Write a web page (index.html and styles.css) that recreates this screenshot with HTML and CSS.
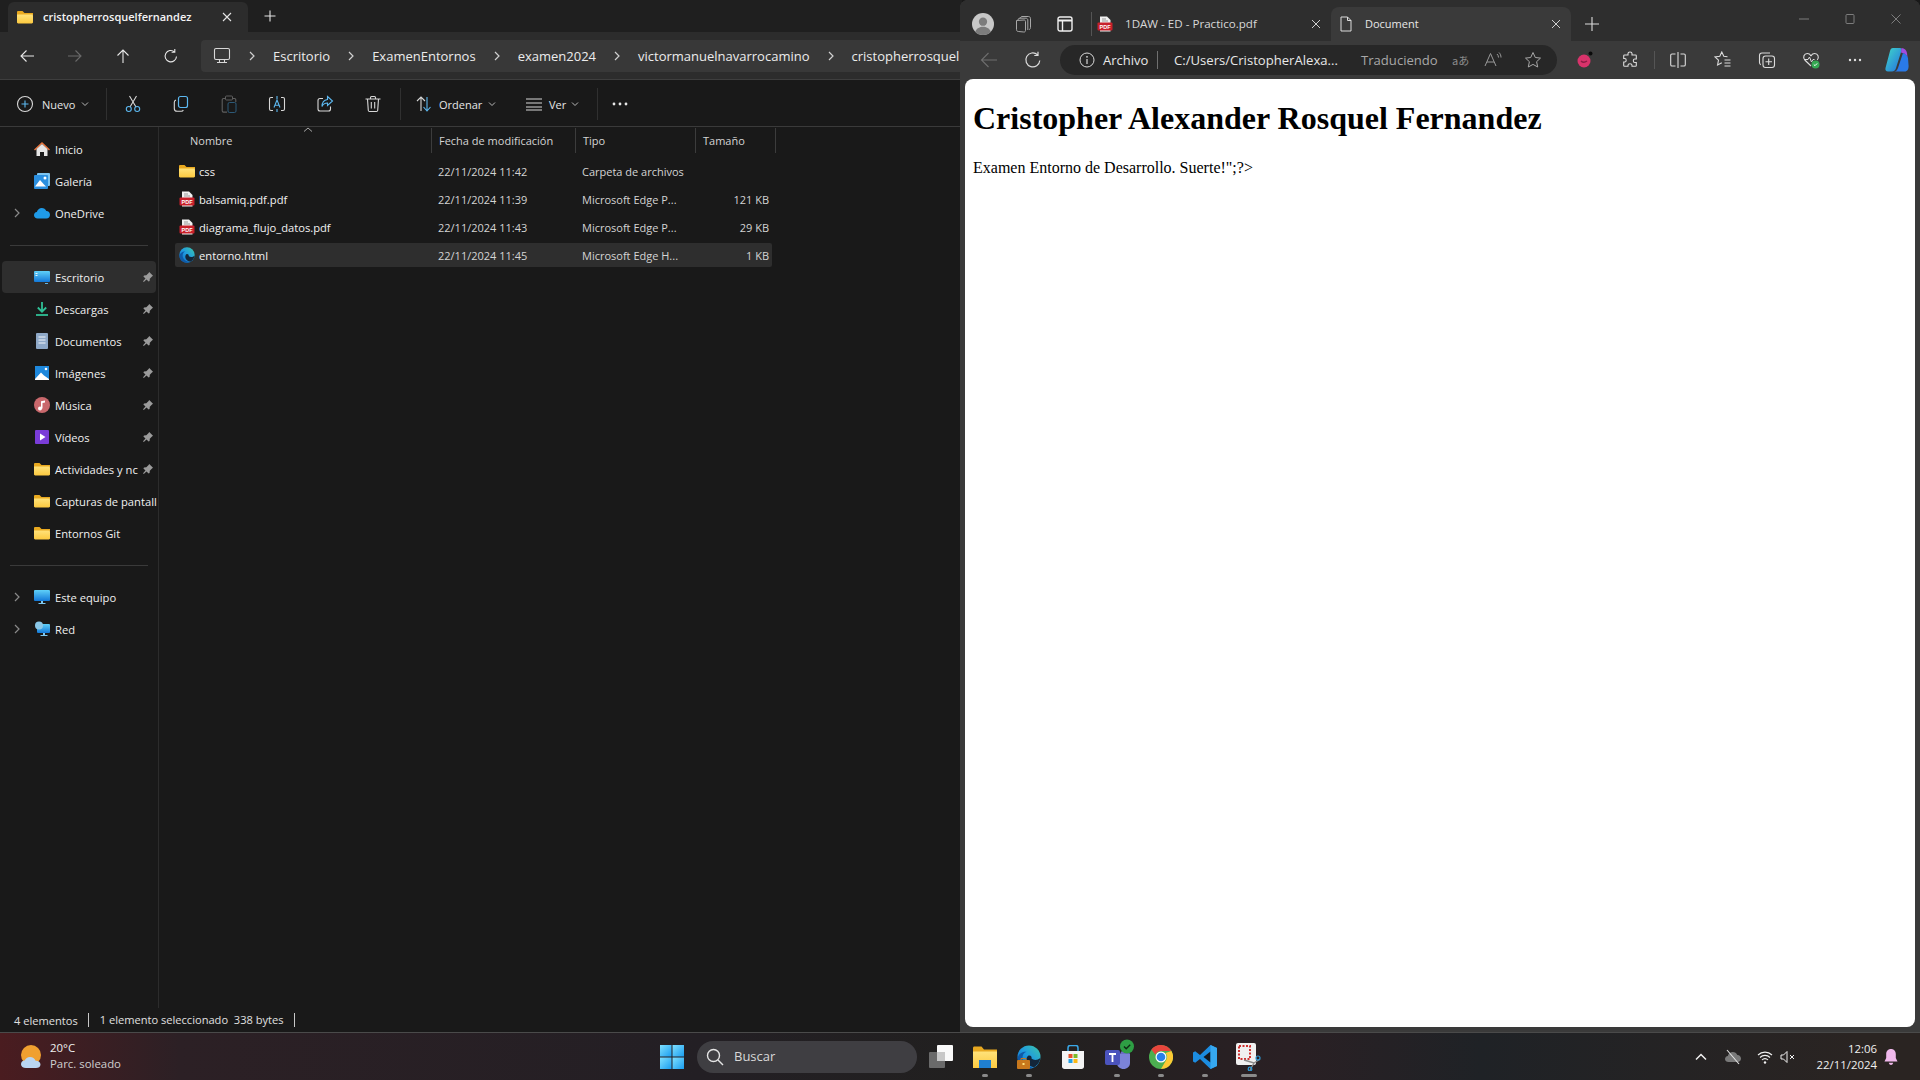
FILE: index.html
```html
<!DOCTYPE html>
<html lang="es">
<head>
<meta charset="UTF-8">
<title>Explorador y Edge</title>
<link rel="stylesheet" href="styles.css">
</head>
<body>

<svg class="defs" width="0" height="0">
	<defs>
		<linearGradient id="fold" x1="0" y1="0" x2="0" y2="1"><stop offset="0" stop-color="#ffe27a"/><stop offset="1" stop-color="#fcc93f"/></linearGradient>
		<linearGradient id="edgeA" x1="1" y1="0" x2="0" y2="1"><stop offset="0" stop-color="#3cc8a8"/><stop offset=".5" stop-color="#1f9ae0"/><stop offset="1" stop-color="#1068c0"/></linearGradient>
		<linearGradient id="blue" x1="0" y1="0" x2="0" y2="1"><stop offset="0" stop-color="#5fd0f8"/><stop offset="1" stop-color="#1378d8"/></linearGradient>
		<linearGradient id="win" x1="0" y1="0" x2="1" y2="1"><stop offset="0" stop-color="#7fe0ff"/><stop offset="1" stop-color="#1a9df0"/></linearGradient>
		<linearGradient id="cop" x1="0" y1="0" x2="1" y2="1"><stop offset="0" stop-color="#3fd8c8"/><stop offset="1" stop-color="#2470e0"/></linearGradient>
		<symbol id="folder" viewBox="0 0 16 16"><path d="M0 3.200C0 2.500.5 2 1.200 2h4.300l2 2H16v2H0z" fill="#e9a91f"/><path d="M0 5.500h14.800c.7 0 1.200.5 1.200 1.200v6.600c0 .7-.5 1.200-1.200 1.200H1.200C.5 14.500 0 14 0 13.300z" fill="url(#fold)"/></symbol>
		<symbol id="pdf" viewBox="0 0 16 16"><path d="M3 .5h7l3.500 3.500V15.500H3z" fill="#f1f1f1"/><path d="M5 3h4M5 5h6" stroke="#999" stroke-width="1"/><rect x="0.500" y="6.500" width="15" height="8" rx="1" fill="#c8202a"/><text x="8" y="12.500" class="pdf-label" text-anchor="middle">PDF</text></symbol>
		<symbol id="pin" viewBox="0 0 12 12"><path d="M7.200 1 11 4.800l-1 .6-2.200 2.300-.2 2.300-1 .6L4.500 8.500 1.800 11 1 10.200l2.500-2.700L1.400 5.400l.6-1 2.300-.2L6.600 2z" fill="#9b9b9b"/></symbol>
		<symbol id="chev" viewBox="0 0 8 12"><path d="M2 2l4 4-4 4" fill="none" stroke="currentColor" stroke-width="1.200"/></symbol>
		<symbol id="down" viewBox="0 0 8 8"><path d="M1 2.500l3 3 3-3" fill="none" stroke="#b8b8b8" stroke-width="1"/></symbol>
		<symbol id="edge" viewBox="0 0 24 24"><circle cx="12" cy="12" r="11.500" fill="url(#edgeA)"/><path d="M.6 13C1.500 8.500 6 6 9.500 6.800c-3 1-4.300 3.500-4 7 .4 4.500 5 8 10 8.700-1.200.6-2.300 1-3.500 1C5 23.500.3 18.500.6 13z" fill="#0f5aa8"/><path d="M11.500 10.500c2.500-.5 3.500 1.500 3 3 2 2 6 2 8.800-.5-.4 4-3 7.500-6.300 9.200-3-.2-7-3-7.500-6.700-.2-2 .3-4 2-5z" fill="#13263a"/></symbol>
	</defs>
</svg>

<div class="desktop">

	<!-- explorador -->
	<div class="explorer">
		<div class="ex-tabs">
			<div class="ex-tab">
				<svg class="i16"><use href="#folder"/></svg>
				<span class="ex-tab-name">cristopherrosquelfernandez</span>
				<svg class="i12 ex-tab-x" viewBox="0 0 12 12"><path d="M2 2l8 8M10 2l-8 8" stroke="#e4e4e4" stroke-width="1.100"/></svg>
			</div>
			<svg class="i12 ex-tab-plus" viewBox="0 0 12 12"><path d="M6 .5v11M.5 6h11" stroke="#e4e4e4" stroke-width="1.100"/></svg>
		</div>

		<div class="ex-nav">
			<div class="nav-btn"><svg class="i16" viewBox="0 0 16 16"><path d="M15 8H2M7.500 2.500 2 8l5.500 5.500" fill="none" stroke="#e8e8e8" stroke-width="1.100"/></svg></div>
			<div class="nav-btn"><svg class="i16" viewBox="0 0 16 16"><path d="M1 8h13M8.500 2.500 14 8l-5.500 5.500" fill="none" stroke="#6a6a6a" stroke-width="1.100"/></svg></div>
			<div class="nav-btn"><svg class="i16" viewBox="0 0 16 16"><path d="M8 15V2M2.500 7.500 8 2l5.500 5.500" fill="none" stroke="#e8e8e8" stroke-width="1.100"/></svg></div>
			<div class="nav-btn"><svg class="i16" viewBox="0 0 16 16"><path d="M13.500 8.500A5.700 5.700 0 1 1 11.500 3.800M11.800 1v3.200H8.600" fill="none" stroke="#e8e8e8" stroke-width="1.100"/></svg></div>
			<div class="crumbs">
				<svg class="crumb-pc" viewBox="0 0 18 18"><rect x="1.500" y="1.500" width="15" height="11" rx="1.500" fill="none" stroke="#d8d8d8" stroke-width="1.100"/><path d="M6.500 12.500v3M11.500 12.500v3M4 15.500h10" stroke="#d8d8d8" stroke-width="1.100"/></svg>
				<svg class="crumb-sep"><use href="#chev"/></svg><span class="crumb">Escritorio</span>
				<svg class="crumb-sep"><use href="#chev"/></svg><span class="crumb">ExamenEntornos</span>
				<svg class="crumb-sep"><use href="#chev"/></svg><span class="crumb">examen2024</span>
				<svg class="crumb-sep"><use href="#chev"/></svg><span class="crumb">victormanuelnavarrocamino</span>
				<svg class="crumb-sep"><use href="#chev"/></svg><span class="crumb">cristopherrosquel</span>
			</div>
		</div>

		<div class="ex-tools">
			<svg class="i18" viewBox="0 0 18 18"><circle cx="9" cy="9" r="7.500" fill="none" stroke="#d8d8d8" stroke-width="1.100"/><path d="M9 5.500v7M5.500 9h7" stroke="#5cb8f0" stroke-width="1.100"/></svg>
			<span class="tool-label tool-new">Nuevo</span>
			<svg class="i8 tool-down"><use href="#down"/></svg>
			<div class="tool-sep sep-a"></div>
			<div class="tool-btn"><svg class="i18" viewBox="0 0 18 18"><path d="M5.500 1l6.500 11M12.500 1 6 12" stroke="#d8d8d8" stroke-width="1.100"/><circle cx="4.800" cy="14" r="2.500" fill="none" stroke="#5cb8f0" stroke-width="1.100"/><circle cx="13.200" cy="14" r="2.500" fill="none" stroke="#5cb8f0" stroke-width="1.100"/></svg></div>
			<div class="tool-btn"><svg class="i18" viewBox="0 0 18 18"><rect x="6.500" y="1.500" width="9" height="11" rx="2" fill="none" stroke="#5cb8f0" stroke-width="1.200"/><path d="M4 5C2.800 5.400 2.300 6 2.300 7.200v6.300c0 1.800 1 2.800 2.800 2.800h4.200c1 0 1.700-.5 2-1.300" fill="none" stroke="#d8d8d8" stroke-width="1.100"/></svg></div>
			<div class="tool-btn"><svg class="i18" viewBox="0 0 18 18"><path d="M5 3.500H3.500c-.8 0-1.300.5-1.300 1.300v11c0 .8.500 1.300 1.300 1.300H7M13 3.500h1.500c.8 0 1.300.5 1.300 1.300V7" fill="none" stroke="#5f5f5f" stroke-width="1.100"/><rect x="5.500" y="1" width="7" height="4" rx="1" fill="none" stroke="#5f5f5f"/><rect x="8" y="7.500" width="8" height="10" rx="1.500" fill="none" stroke="#2d5a78"/></svg></div>
			<div class="tool-btn"><svg class="i18" viewBox="0 0 18 18"><path d="M5 2.500H3c-1 0-1.500.5-1.500 1.500v10c0 1 .5 1.500 1.500 1.500h2M13 2.500h2c1 0 1.500.5 1.500 1.500v10c0 1-.5 1.500-1.500 1.500h-2" fill="none" stroke="#d8d8d8" stroke-width="1.100"/><path d="M6 12.500 9 5l3 7.500M7 10.200h4M9 1v3M9 14v3" fill="none" stroke="#5cb8f0" stroke-width="1.100"/></svg></div>
			<div class="tool-btn"><svg class="i18" viewBox="0 0 18 18"><path d="M7 3.500H4c-1.200 0-2 .8-2 2V14c0 1.200.8 2 2 2h8.500c1.200 0 2-.8 2-2v-2.500" fill="none" stroke="#d8d8d8" stroke-width="1.100"/><path d="M11.500 1.500 16.500 6l-5 4.500V8c-3 0-4.500 1.200-5.500 3.500 0-4 2-6.500 5.500-7z" fill="none" stroke="#5cb8f0" stroke-width="1.100"/></svg></div>
			<div class="tool-btn"><svg class="i18" viewBox="0 0 18 18"><path d="M1.500 4h15M6.500 4V2.500c0-.7.4-1 1-1h3c.6 0 1 .3 1 1V4M3.500 4l.8 11.500c.1.700.6 1 1.200 1h7c.6 0 1.100-.3 1.200-1L14.500 4M7.300 7v6.500M10.700 7v6.500" fill="none" stroke="#d8d8d8" stroke-width="1.100"/></svg></div>
			<div class="tool-sep sep-b"></div>
			<svg class="i18 tool-sort" viewBox="0 0 18 18"><path d="M6 16V2M2 6l4-4 4 4" fill="none" stroke="#d8d8d8" stroke-width="1.100"/><path d="M12 2v14M8.500 12l3.500 4 3.500-4" fill="none" stroke="#5cb8f0" stroke-width="1.100"/></svg>
			<span class="tool-label tool-order">Ordenar</span>
			<svg class="i8 tool-down"><use href="#down"/></svg>
			<svg class="i18 tool-view" viewBox="0 0 18 18"><path d="M1 4h16M1 8h16M1 12h16M1 15h16" stroke="#d8d8d8" stroke-width="1"/></svg>
			<span class="tool-label tool-ver">Ver</span>
			<svg class="i8 tool-down"><use href="#down"/></svg>
			<div class="tool-sep sep-c"></div>
			<svg class="tool-more" viewBox="0 0 18 6"><circle cx="3" cy="3" r="1.400" fill="#e8e8e8"/><circle cx="9" cy="3" r="1.400" fill="#e8e8e8"/><circle cx="15" cy="3" r="1.400" fill="#e8e8e8"/></svg>
		</div>

		<div class="ex-main">
			<div class="side">
				<div class="side-item"><span class="side-chev"></span><svg class="i16" viewBox="0 0 16 16"><path d="M8 1 0 8.500l1 1L8 3l7 6.500 1-1z" fill="#e8743c"/><path d="M2.500 8 8 3l5.500 5v7H10v-4H6v4H2.500z" fill="#e6e6e6"/></svg><span class="side-text">Inicio</span></div>
				<div class="side-item"><span class="side-chev"></span><svg class="i16" viewBox="0 0 16 16"><rect x="3" y="0" width="13" height="13" rx="1" fill="#7cc4f0"/><rect x="0" y="2" width="14" height="14" rx="1" fill="#2a8fe0"/><path d="M1 13.500 6 7l4 4.500 2 2z" fill="#fff"/><circle cx="11" cy="5" r="1.500" fill="#fff"/></svg><span class="side-text">Galería</span></div>
				<div class="side-item"><span class="side-chev"><svg class="i-chev"><use href="#chev"/></svg></span><svg class="i16" viewBox="0 0 16 16"><path d="M3.500 13.500C1.500 13.500 0 12 0 10.300c0-1.700 1.200-3 2.800-3.200C3.400 4.700 5.400 3 7.800 3c2 0 3.700 1.200 4.500 3 2-.1 3.700 1.500 3.700 3.700 0 2-1.500 3.800-3.500 3.800z" fill="#1f9be8"/></svg><span class="side-text">OneDrive</span></div>
				<div class="side-gap"></div>
				<div class="side-item side-sel"><span class="side-chev"></span><svg class="i16" viewBox="0 0 16 16"><rect y="2" width="16" height="11" rx="1" fill="url(#blue)"/><path d="M1.500 4h2v1h-2zM1.500 6h2v1h-2z" fill="#e8f6ff"/><path d="M11 14h3v1h-3z" fill="#5fb5e8"/></svg><span class="side-text">Escritorio</span><svg class="pin"><use href="#pin"/></svg></div>
				<div class="side-item"><span class="side-chev"></span><svg class="i16" viewBox="0 0 16 16"><path d="M8 1v9M3.800 6.500 8 10.700l4.200-4.200" fill="none" stroke="#2fc096" stroke-width="1.800"/><path d="M2 14h12" stroke="#2fc096" stroke-width="1.800"/></svg><span class="side-text">Descargas</span><svg class="pin"><use href="#pin"/></svg></div>
				<div class="side-item"><span class="side-chev"></span><svg class="i16" viewBox="0 0 16 16"><rect x="2" y="0" width="12" height="16" rx="1" fill="#8fa9c8"/><path d="M4.500 4h7M4.500 7h7M4.500 10h7" stroke="#f2f6fa" stroke-width="1.200"/></svg><span class="side-text">Documentos</span><svg class="pin"><use href="#pin"/></svg></div>
				<div class="side-item"><span class="side-chev"></span><svg class="i16" viewBox="0 0 16 16"><rect x="1" y="1" width="14" height="14" fill="#1e88dc"/><path d="M1 14 7 7.500l3 3 5 3.500v1H1z" fill="#fff"/><circle cx="12" cy="4" r="1.300" fill="#fff"/></svg><span class="side-text">Imágenes</span><svg class="pin"><use href="#pin"/></svg></div>
				<div class="side-item"><span class="side-chev"></span><svg class="i16" viewBox="0 0 16 16"><circle cx="8" cy="8" r="8" fill="#c9686c"/><path d="M7 11.500V4.200l4-.8v2l-2.500.5v5.600" fill="#fff"/><circle cx="6" cy="11.500" r="2" fill="#fff"/></svg><span class="side-text">Música</span><svg class="pin"><use href="#pin"/></svg></div>
				<div class="side-item"><span class="side-chev"></span><svg class="i16" viewBox="0 0 16 16"><rect x="1" y="1" width="14" height="14" rx="1" fill="#7a3cd8"/><path d="M6 4.500v7l5.500-3.500z" fill="#fff"/></svg><span class="side-text">Vídeos</span><svg class="pin"><use href="#pin"/></svg></div>
				<div class="side-item"><span class="side-chev"></span><svg class="i16"><use href="#folder"/></svg><span class="side-text">Actividades y nc</span><svg class="pin"><use href="#pin"/></svg></div>
				<div class="side-item"><span class="side-chev"></span><svg class="i16"><use href="#folder"/></svg><span class="side-text">Capturas de pantall</span></div>
				<div class="side-item"><span class="side-chev"></span><svg class="i16"><use href="#folder"/></svg><span class="side-text">Entornos Git</span></div>
				<div class="side-gap"></div>
				<div class="side-item"><span class="side-chev"><svg class="i-chev"><use href="#chev"/></svg></span><svg class="i16" viewBox="0 0 16 16"><rect y="1" width="16" height="11" rx="1" fill="url(#blue)"/><path d="M7 12h2v2H7zM4.500 14h7v1h-7z" fill="#7ec8f0"/></svg><span class="side-text">Este equipo</span></div>
				<div class="side-item"><span class="side-chev"><svg class="i-chev"><use href="#chev"/></svg></span><svg class="i16" viewBox="0 0 16 16"><rect x="3" y="3" width="13" height="9" rx="1" fill="url(#blue)"/><circle cx="5" cy="4.500" r="4" fill="#8ac8e8"/><path d="M9 12h2v2H9zM6.500 14h7v1h-7z" fill="#7ec8f0"/></svg><span class="side-text">Red</span></div>
			</div>

			<div class="files">
				<div class="file-head">
					<span class="sort-arrow"><svg viewBox="0 0 10 5" width="10" height="5"><path d="M1 4.500 5 1l4 3.500" fill="none" stroke="#a8a8a8"/></svg></span>
					<div class="hd hd-name">Nombre</div>
					<div class="hd">Fecha de modificación</div>
					<div class="hd">Tipo</div>
					<div class="hd hd-size">Tamaño</div>
				</div>
				<div class="file-row">
					<div class="cell-name"><svg class="i16"><use href="#folder"/></svg>css</div>
					<div class="cell">22/11/2024 11:42</div>
					<div class="cell cell-wide">Carpeta de archivos</div>
					<div class="cell cell-size"></div>
				</div>
				<div class="file-row">
					<div class="cell-name"><svg class="i16"><use href="#pdf"/></svg>balsamiq.pdf.pdf</div>
					<div class="cell">22/11/2024 11:39</div>
					<div class="cell">Microsoft Edge P...</div>
					<div class="cell cell-size">121 KB</div>
				</div>
				<div class="file-row">
					<div class="cell-name"><svg class="i16"><use href="#pdf"/></svg>diagrama_flujo_datos.pdf</div>
					<div class="cell">22/11/2024 11:43</div>
					<div class="cell">Microsoft Edge P...</div>
					<div class="cell cell-size">29 KB</div>
				</div>
				<div class="file-row file-sel">
					<div class="cell-name"><svg class="i16"><use href="#edge"/></svg>entorno.html</div>
					<div class="cell">22/11/2024 11:45</div>
					<div class="cell">Microsoft Edge H...</div>
					<div class="cell cell-size">1 KB</div>
				</div>
			</div>
		</div>

		<div class="ex-status">
			<span>4 elementos</span>
			<span class="status-item">1 elemento seleccionado&nbsp; 338 bytes</span>
			<span class="status-item status-end"></span>
		</div>
	</div>

	<!-- navegador -->
	<div class="browser">
		<div class="br-tabs">
			<svg class="br-avatar" viewBox="0 0 24 24"><circle cx="12" cy="12" r="12" fill="#c8c8c8"/><circle cx="12" cy="9.500" r="4.500" fill="#7c7c7c"/><path d="M3.500 20.500c1.500-4 5-5.500 8.500-5.500s7 1.500 8.500 5.500C18.500 23 15.500 24 12 24s-6.500-1-8.500-3.500z" fill="#7c7c7c"/></svg>
			<svg class="i18 br-work" viewBox="0 0 18 18"><path d="M6 3.500 7.500 1.500h7c1 0 2 .8 2 2v9c0 1-.6 1.800-1.500 2.200M3.800 5 5 3.200h7c1 0 1.800.8 1.800 1.800v10" fill="none" stroke="#a8a8a8"/><path d="M2.500 5.500 10 5c1 0 1.500.7 1.500 1.500v9c0 1-.7 1.700-1.700 1.500l-5.500-.5c-1 0-1.800-.8-1.800-1.800z" fill="none" stroke="#a8a8a8"/></svg>
			<svg class="i16 br-vert" viewBox="0 0 16 16"><rect x="1" y="1" width="14" height="14" rx="2" fill="none" stroke="#efefef" stroke-width="1.400"/><path d="M1 4.500h14" stroke="#efefef" stroke-width="2"/><path d="M5.500 5v10" stroke="#efefef" stroke-width="1.400"/></svg>
			<div class="br-tab-sep"></div>
			<div class="br-tab">
				<svg class="i16"><use href="#pdf"/></svg>
				<span class="br-tab-name br-tab-long">1DAW - ED - Practico.pdf</span>
				<svg class="i10 br-x" viewBox="0 0 10 10"><path d="M1 1l8 8M9 1 1 9" stroke="#cfcfcf" stroke-width="1"/></svg>
			</div>
			<div class="br-tab br-tab-on">
				<svg class="i16" viewBox="0 0 16 16"><path d="M3 1h6.500L13 4.500V15H3z M9.500 1v3.500H13" fill="none" stroke="#dcdcdc" stroke-width="1"/></svg>
				<span class="br-tab-name">Document</span>
				<svg class="i10 br-x" viewBox="0 0 10 10"><path d="M1 1l8 8M9 1 1 9" stroke="#cfcfcf" stroke-width="1"/></svg>
			</div>
			<svg class="i14 br-plus" viewBox="0 0 14 14"><path d="M7 0v14M0 7h14" stroke="#dcdcdc" stroke-width="1.100"/></svg>
			<div class="win-ctrl">
				<svg class="i10" viewBox="0 0 10 10"><path d="M0 5h10" stroke="#7d7d7d"/></svg>
				<svg class="i10" viewBox="0 0 10 10"><rect x="1" y=".5" width="8" height="9" rx="1" fill="none" stroke="#7d7d7d"/></svg>
				<svg class="i10" viewBox="0 0 10 10"><path d="M.5.500l9 9M9.500.5l-9 9" stroke="#7d7d7d"/></svg>
			</div>
		</div>

		<div class="br-bar">
			<svg class="i18 br-back" viewBox="0 0 18 18"><path d="M17 9H1.500M8.500 2 1.500 9l7 7" fill="none" stroke="#6e6e6e" stroke-width="1.100"/></svg>
			<svg class="i18 br-reload" viewBox="0 0 18 18"><path d="M15.800 9.500A7 7 0 1 1 13.500 3.700M14 .8v3.700h-3.700" fill="none" stroke="#dcdcdc" stroke-width="1.200"/></svg>
			<div class="addr">
				<svg class="i16" viewBox="0 0 16 16"><circle cx="8" cy="8" r="7" fill="none" stroke="#d8d8d8" stroke-width="1"/><path d="M8 7v5" stroke="#d8d8d8" stroke-width="1.200"/><circle cx="8" cy="4.800" r=".9" fill="#d8d8d8"/></svg>
				<span class="addr-scheme">Archivo</span>
				<span class="addr-sep"></span>
				<span class="addr-url">C:/Users/CristopherAlexa...</span>
				<span class="addr-trans">Traduciendo</span>
				<span class="addr-glyph">aあ</span>
				<svg class="i18 addr-read" viewBox="0 0 18 18"><path d="M1 15 6.500 2.500 12 15M3 11h7M13 3c1 1 1.500 2 1.500 3.500M15 1.500c1.300 1.300 2 3 2 5" fill="none" stroke="#9a9a9a" stroke-width="1"/></svg>
				<svg class="i18 addr-star" viewBox="0 0 18 18"><path d="M9 1.500l2.300 5 5.200.6-3.900 3.600 1.100 5.300L9 13.400 4.300 16l1.100-5.300L1.500 7.100l5.200-.6z" fill="none" stroke="#a8a8a8" stroke-width="1"/></svg>
			</div>
			<div class="br-icons">
				<svg class="i18 ext-pink" viewBox="0 0 18 18"><circle cx="8" cy="10" r="6.500" fill="#d8336b"/><path d="M5 10c1.500 1.500 4 1.500 6 0" fill="none" stroke="#8a1c44" stroke-width="1.400"/><circle cx="14.500" cy="2.500" r="2" fill="#0a0a0a"/></svg>
				<svg class="i18 ext-puzzle" viewBox="0 0 18 18"><path d="M7 2.500c0-2 4-2 4 0V4h3.500c.5 0 .8.300.8.800V8h-1.500c-2 0-2 3.500 0 3.500h1.500v3c0 .5-.3.800-.8.800H11v-1c0-2-4-2-4 0v1H3.500c-.5 0-.8-.3-.8-.8V11h1c2 0 2-3.500 0-3.500h-1V4.800c0-.5.3-.8.8-.8H7z" fill="none" stroke="#dcdcdc" stroke-width="1.100"/></svg>
				<div class="br-bar-sep"></div>
				<svg class="i18 ext-split" viewBox="0 0 18 18"><path d="M6.500 3H3c-.8 0-1.300.5-1.300 1.300v9.400c0 .8.500 1.300 1.300 1.300h3.500M11.500 3H15c.8 0 1.300.5 1.300 1.300v9.400c0 .8-.5 1.300-1.300 1.300h-3.500M9 1v16" fill="none" stroke="#dcdcdc" stroke-width="1.100"/></svg>
				<svg class="i18 ext-favs" viewBox="0 0 18 18"><path d="M13.500 5.800 9.800 5.300 7.800 1 5.800 5.300 1 5.900l3.500 3.300L3.600 14l4.200-2.300M10.500 9h6M10.500 12h6M10.500 15h6" fill="none" stroke="#dcdcdc" stroke-width="1.100"/></svg>
				<svg class="i18 ext-coll" viewBox="0 0 18 18"><path d="M12 2H4C2.500 2 1.500 3 1.500 4.500v7c0 1 .5 1.800 1.300 2.200" fill="none" stroke="#dcdcdc" stroke-width="1.100"/><rect x="5" y="5" width="11.500" height="11.500" rx="2.500" fill="none" stroke="#dcdcdc" stroke-width="1.100"/><path d="M10.700 7.500v6.500M7.500 10.700H14" stroke="#dcdcdc" stroke-width="1.100"/></svg>
				<svg class="i18 ext-health" viewBox="0 0 18 18"><path d="M9 15 2.800 9C.5 6.500 2 2.500 5.300 2.500 7 2.500 8.200 3.500 9 4.700c.8-1.200 2-2.200 3.700-2.200C16 2.500 17.500 6.500 15.200 9" fill="none" stroke="#dcdcdc" stroke-width="1.100"/><path d="M2 8.500h4l1.500-2.500 2 5 1.500-2.500h1.500" fill="none" stroke="#dcdcdc" stroke-width="1"/><circle cx="13.500" cy="13.500" r="4" fill="#35a852"/><path d="M11.800 13.500l1.200 1.200 2.200-2.300" fill="none" stroke="#fff"/></svg>
				<svg class="ext-more" viewBox="0 0 14 4"><circle cx="2" cy="2" r="1.200" fill="#e0e0e0"/><circle cx="7" cy="2" r="1.200" fill="#e0e0e0"/><circle cx="12" cy="2" r="1.200" fill="#e0e0e0"/></svg>
				<svg class="ext-copilot" viewBox="0 0 24 26"><path d="M8 1h7c1.500 0 2 1 1.500 2.500L11 21c-.6 2-1.800 3.500-4 3.500H3c-2 0-3-1.500-2.500-3.500L5 4C5.500 2 6.300 1 8 1z" fill="url(#cop)"/><path d="M14 6h3c3 0 5 1.500 6 5l.6 8c0 3-1 5.500-4 5.500H9c2 0 3-1 4-3.500l5-15z" fill="#2a7ae8"/><path d="M16.500 1c3 .2 5 2 5.500 5l.5 4c-1-2.500-3-3.800-5-4l-1.500-.5z" fill="#a04ce0"/></svg>
			</div>
		</div>

		<div class="page">
			<h1>Cristopher Alexander Rosquel Fernandez</h1>
			<p>Examen Entorno de Desarrollo. Suerte!";?&gt;</p>
		</div>
	</div>
</div>

<!-- barra de tareas -->
<div class="taskbar">
	<div class="tb-weather">
		<svg class="tb-sun" viewBox="0 0 24 24"><circle cx="11" cy="10" r="10" fill="#f0a030"/><path d="M6 23c-3 0-5-1.500-5-3.800 0-2 1.500-3.500 3.600-3.600C5.500 13.500 7.500 12 10 12c2.700 0 4.800 1.500 5.600 3.700 2.500-.2 4.900 1.200 4.900 3.700 0 2.200-2 3.600-4.500 3.600z" fill="#b9d6f2"/></svg>
		<div class="tb-wtext"><div class="tb-temp">20°C</div><div class="tb-sky">Parc. soleado</div></div>
	</div>
	<div class="tb-center">
		<svg class="tb-win" viewBox="0 0 24 24"><rect width="11.500" height="11.500" fill="url(#win)"/><rect x="12.500" width="11.500" height="11.500" fill="url(#win)"/><rect y="12.500" width="11.500" height="11.500" fill="url(#win)"/><rect x="12.500" y="12.500" width="11.500" height="11.500" fill="url(#win)"/></svg>
		<div class="tb-search">
			<svg class="i18" viewBox="0 0 18 18"><circle cx="7.500" cy="7.500" r="6" fill="none" stroke="#e4e4e4" stroke-width="1.400"/><path d="M12 12l5 5" stroke="#e4e4e4" stroke-width="1.400"/></svg>
			<span class="tb-search-text">Buscar</span>
		</div>
		<div class="tb-app"><svg class="i24" viewBox="0 0 24 24"><rect y="7" width="16" height="16" rx="1" fill="#6a6a6a"/><rect x="8" y="0" width="16" height="16" rx="1" fill="#fafafa"/><rect x="8" y="7" width="8" height="9" fill="#c8c8c8"/></svg></div>
		<div class="tb-app tb-run"><svg class="i24" viewBox="0 0 24 24"><path d="M0 3c0-.8.500-1.500 1.500-1.500h7l2.500 3h13v4H0z" fill="#e8a820"/><path d="M0 6.500h24V23H0z" fill="url(#fold)"/><path d="M6 15h12v8H6z" fill="#1f7fd0"/></svg></div>
		<div class="tb-app tb-run">
			<svg class="i24" viewBox="0 0 24 24"><use href="#edge" width="24" height="24"/><rect x="0" y="15" width="13" height="9" rx="1" fill="#c8781c"/><path d="M4 15v-1.500h5V15" fill="none" stroke="#c8781c"/><rect x="5.500" y="18" width="2" height="2" fill="#ffe27a"/></svg>
		</div>
		<div class="tb-app"><svg class="i24" viewBox="0 0 24 24"><path d="M7 6V3c0-1.500 1-2.500 2-2.500h6c1 0 2 1 2 2.500v3" fill="none" stroke="#3aa8e8" stroke-width="1.500"/><path d="M1 6h22v15.500c0 1.500-1 2.500-2.500 2.500h-17C2 24 1 23 1 21.500z" fill="#f4f4f4"/><rect x="7.500" y="9" width="4" height="4" fill="#e8502a"/><rect x="12.500" y="9" width="4" height="4" fill="#7cbb2a"/><rect x="7.500" y="14" width="4" height="4" fill="#1fa0e8"/><rect x="12.500" y="14" width="4" height="4" fill="#fcb814"/></svg></div>
		<div class="tb-app tb-run"><svg class="tb-teams" viewBox="0 0 30 30"><circle cx="20" cy="16" r="5" fill="#6c6cc8"/><path d="M12 15h13v9c0 3.500-3 6-6.500 6S12 27.500 12 24z" fill="#7b83d8"/><rect x="0" y="11" width="15" height="15" rx="2" fill="#4b53bc"/><path d="M4 15h7M7.500 15v8" stroke="#fff" stroke-width="1.800"/><circle cx="22" cy="7.500" r="7" fill="#2e9e44"/><path d="M19 7.500l2.200 2.200 4-4" fill="none" stroke="#0e2a14" stroke-width="1.400"/></svg></div>
		<div class="tb-app tb-run"><svg class="i24" viewBox="0 0 24 24"><circle cx="12" cy="12" r="12" fill="#4caf50"/><path d="M12 0a12 12 0 0 1 10.400 6H12a6 6 0 0 0-5.600 3.800L2.400 4.500A12 12 0 0 1 12 0z" fill="#e8453c"/><path d="M22.400 6A12 12 0 0 1 12 24l5.200-9A6 6 0 0 0 16.500 8z" fill="#fcc934"/><circle cx="12" cy="12" r="5.500" fill="#fff"/><circle cx="12" cy="12" r="4.300" fill="#2a80e8"/></svg></div>
		<div class="tb-app tb-run"><svg class="i24" viewBox="0 0 24 24"><path d="M17.500 0 24 3v18l-6.500 3L7 14l-4.800 3.700L0 16.500v-9L2.200 6.300 7 10z" fill="#1c8ce0"/><path d="M17.500 6.500 10.500 12l7 5.500z" fill="#14181e"/><path d="M17.500 0 24 3v18l-6.500 3z" fill="#36a8f0"/></svg></div>
		<div class="tb-app tb-run tb-wide"><svg class="tb-snip" viewBox="0 0 26 28"><rect x="0" y="0" width="20" height="22" rx="2" fill="#f0f0f0"/><rect x="3" y="3" width="11" height="13" fill="none" stroke="#d03030" stroke-width="2" stroke-dasharray="2 1.500"/><path d="M8 17l10 3 6-4M14 27l4-7" fill="none" stroke="#8a8a8a" stroke-width="1.400"/><circle cx="22" cy="15" r="2" fill="none" stroke="#2a9ad8" stroke-width="1.200"/><circle cx="14" cy="26" r="1.800" fill="none" stroke="#2a9ad8" stroke-width="1.200"/></svg></div>
	</div>
	<div class="tb-tray">
		<svg class="tray-up" viewBox="0 0 12 8"><path d="M1 6.500 6 1.500l5 5" fill="none" stroke="#f0f0f0" stroke-width="1.500"/></svg>
		<svg class="i16 tray-od" viewBox="0 0 16 16"><path d="M3.500 13C1.500 13 0 11.700 0 10s1.200-3 2.800-3.100C3.500 4.500 5.500 3 7.800 3c2 0 3.700 1.200 4.500 3 2-.1 3.700 1.500 3.700 3.500s-1.500 3.500-3.500 3.500z" fill="#7a7a7a"/><path d="M2 1l12 14" stroke="#e4e4e4" stroke-width="1.100"/></svg>
		<svg class="i16 tray-wifi" viewBox="0 0 16 16"><path d="M1 6a10 10 0 0 1 14 0M3 8.500a7 7 0 0 1 10 0M5 11a4 4 0 0 1 6 0" fill="none" stroke="#f0f0f0" stroke-width="1.100"/><circle cx="8" cy="13.500" r="1.200" fill="#f0f0f0"/></svg>
		<svg class="i16 tray-vol" viewBox="0 0 16 16"><path d="M1 6h2.500L7 2.500v11L3.500 10H1z" fill="none" stroke="#f0f0f0" stroke-width="1"/><path d="M10 6l4 4M14 6l-4 4" stroke="#f0f0f0" stroke-width="1"/></svg>
		<div class="tray-clock"><div>12:06</div><div>22/11/2024</div></div>
		<svg class="i16 tray-bell" viewBox="0 0 16 16"><path d="M8 0c3 0 4.800 2.200 4.800 5v4l1.700 3.500h-13L3.200 9V5C3.200 2.200 5 0 8 0z" fill="#f0b8ec"/><path d="M5.800 13.800h4.400C9.800 15.300 9 16 8 16s-1.800-.7-2.200-2.200z" fill="#f0b8ec"/></svg>
	</div>
</div>

</body>
</html>
```

FILE: styles.css
```css
* { box-sizing: border-box; }
html, body { margin: 0; height: 100%; }
body {
	width: 1920px;
	height: 1080px;
	overflow: hidden;
	display: flex;
	flex-direction: column;
	background-color: #191919;
	font-family: "Open Sans", "Noto Sans", sans-serif;
	font-size: 11px;
	color: #e6e6e6;
}
svg { display: block; flex: none; }
.defs { position: absolute; }
.pdf-label { font-family: "Liberation Sans", sans-serif; font-size: 5.500px; font-weight: bold; fill: #fff; }
.i8 { width: 8px; height: 8px; }
.i10 { width: 10px; height: 10px; }
.i12 { width: 12px; height: 12px; }
.i14 { width: 14px; height: 14px; }
.i16 { width: 16px; height: 16px; }
.i18 { width: 18px; height: 18px; }
.i24 { width: 24px; height: 24px; }

.desktop { position: relative; height: 1032px; flex: none; }

/* explorer */
.explorer {
	position: absolute;
	left: 0;
	top: 0;
	width: 962px;
	height: 1032px;
	display: flex;
	flex-direction: column;
	overflow: hidden;
	background-color: #191919;
}
.ex-tabs {
	height: 32px;
	flex: none;
	display: flex;
	align-items: flex-end;
	padding-left: 8px;
	background-color: #1f1f1f;
}
.ex-tab {
	width: 240px;
	height: 30px;
	display: flex;
	align-items: center;
	padding-left: 9px;
	background-color: #2c2c2c;
	border-radius: 6px 6px 0 0;
}
.ex-tab-name { margin: -2px 0 0 10px; font-weight: 600; color: #f4f4f4; width: 178px; white-space: nowrap; }
.ex-tab-plus { margin: 0 0 10px 16px; }
.ex-nav {
	height: 48px;
	flex: none;
	display: flex;
	align-items: center;
	padding-left: 3px;
	background-color: #2c2c2c;
	border-bottom: 1px solid #3e3e3e;
}
.nav-btn { width: 48px; flex: none; display: flex; justify-content: center; }
.crumbs {
	height: 32px;
	margin-left: 6px;
	flex: none;
	width: 900px;
	display: flex;
	align-items: center;
	padding-left: 12px;
	background-color: #383838;
	border-radius: 4px;
	white-space: nowrap;
	font-size: 13px;
	color: #ececec;
}
.crumb-pc { width: 18px; height: 18px; }
.crumb-sep { width: 42px; height: 12px; color: #d0d0d0; }
.crumb { flex: none; }

.ex-tools {
	height: 47px;
	flex: none;
	display: flex;
	align-items: center;
	padding: 2px 0 0 16px;
	background-color: #191919;
	border-bottom: 1px solid #3a3a3a;
}
.tool-label { color: #e6e6e6; white-space: nowrap; }
.tool-new { margin-left: 8px; width: 39px; }
.tool-sep { width: 1px; height: 32px; background-color: #303030; }
.sep-a { margin: 0 2px 0 17px; }
.sep-b { margin: 0 14px 0 3px; }
.sep-c { margin-left: 18px; }
.tool-btn { width: 48px; flex: none; display: flex; justify-content: center; }
.tool-order { margin-left: 6px; width: 49px; }
.tool-view { margin-left: 29px; }
.tool-ver { margin-left: 6px; width: 22px; }
.tool-more { width: 18px; height: 6px; margin-left: 13px; }

.ex-main { flex: 1; display: flex; min-height: 0; }
.side {
	width: 159px;
	flex: none;
	padding-top: 6px;
	border-right: 1px solid #2c2c2c;
	font-size: 11.200px;
}
.side-item {
	height: 32px;
	margin: 0 2px;
	padding-left: 8px;
	display: flex;
	align-items: center;
	border-radius: 4px;
	color: #f0f0f0;
}
.side-sel { background-color: #2e2e2e; }
.side-chev { width: 14px; margin-right: 10px; flex: none; color: #8a8a8a; }
.i-chev { width: 8px; height: 12px; margin-left: 3px; }
.side-text { flex: 1; margin-left: 5px; white-space: nowrap; min-width: 0; }
.pin { width: 12px; height: 12px; margin: 0 2px; }
.side-gap { height: 32px; margin: 0 10px; position: relative; }
.side-gap::after { content: ""; position: absolute; left: 0; right: 0; top: 16px; border-top: 1px solid #3a3a3a; }

.files { flex: 1; padding-left: 16px; position: relative; }
.file-head, .file-row { display: grid; width: 597px; grid-template-columns: 256px 144px 120px 77px; }
.file-head { height: 26px; align-items: end; margin-bottom: 6px; color: #d4d4d4; }
.hd { height: 25px; line-height: 25px; padding-left: 7px; border-left: 1px solid #3c3c3c; }
.hd-name { padding-left: 15px; border-left: none; }
.hd-size { border-right: 1px solid #3c3c3c; width: 81px; }
.sort-arrow { position: absolute; left: 144px; top: 0; }
.file-row { height: 24px; margin-bottom: 4px; align-items: center; border-radius: 2px; color: #d4d4d4; }
.file-sel { background-color: #2e2e2e; }
.cell-name { display: flex; align-items: center; gap: 4px; padding-left: 4px; color: #f2f2f2; white-space: nowrap; font-size: 11.200px; }
.cell { padding-left: 7px; white-space: nowrap; }
.cell-size { padding: 0 3px 0 0; text-align: right; }

.ex-status {
	height: 24px;
	flex: none;
	display: flex;
	align-items: center;
	padding-left: 14px;
	color: #e0e0e0;
	font-size: 11.100px;
}
.status-item { margin-left: 10px; padding-left: 11px; height: 14px; line-height: 14px; border-left: 1px solid #c8c8c8; white-space: nowrap; }
.status-end { padding-left: 0; }

/* browser */
.browser {
	position: absolute;
	left: 960px;
	top: 0;
	width: 960px;
	height: 1032px;
	display: flex;
	flex-direction: column;
	background-color: #3a3a3a;
	border-radius: 8px 8px 0 0;
	overflow: hidden;
}
.br-tabs {
	height: 41px;
	flex: none;
	display: flex;
	align-items: center;
	background-color: #2e2e2e;
	padding-left: 12px;
}
.br-avatar { width: 22px; height: 26px; margin-top: 7px; }
.br-work { margin-left: 20px; margin-top: 7px; }
.br-vert { margin-left: 25px; margin-top: 7px; }
.br-tab-sep { width: 1px; height: 24px; margin: 7px 0 0 18px; background-color: #555; }
.br-tab {
	height: 34px;
	margin-top: 7px;
	width: 239px;
	flex: none;
	display: flex;
	align-items: center;
	padding: 0 10px 0 5px;
	color: #d8d8d8;
}
.br-tab-name { flex: 1; margin: -2px 0 0 11px; white-space: nowrap; }
.br-tab-long { font-size: 11.600px; margin-left: 12px; }
.br-tab-on { width: 240px; padding-left: 7px; background-color: #3a3a3a; border-radius: 8px 8px 0 0; color: #e8e8e8; }
.br-plus { margin: 7px 0 0 14px; }
.win-ctrl { margin-left: auto; margin-right: 19px; display: flex; gap: 36px; margin-bottom: 4px; }

.br-bar { height: 38px; flex: none; display: flex; align-items: center; padding-left: 20px; }
.br-reload { margin-left: 26px; }
.addr {
	width: 497px;
	height: 30px;
	margin-left: 18px;
	flex: none;
	display: flex;
	align-items: center;
	padding-left: 19px;
	background-color: #272727;
	border-radius: 15px;
	font-size: 13px;
	color: #e8e8e8;
	white-space: nowrap;
}
.addr-scheme { margin-left: 8px; width: 50px; }
.addr-sep { width: 1px; height: 18px; background-color: #707070; margin-left: 4px; }
.addr-url { margin-left: 16px; width: 187px; font-size: 13.100px; }
.addr-trans { color: #a8a8a8; width: 84px; font-size: 13.100px; }
.addr-glyph { color: #8c8c8c; width: 30px; font-family: "Noto Sans CJK JP", sans-serif; font-size: 11px; margin-left: 7px; }
.addr-read { margin-left: 2px; }
.addr-star { margin-left: 22px; }
.br-icons { display: flex; align-items: center; padding-left: 19px; flex: 1; }
.ext-puzzle { margin-left: 27px; }
.br-bar-sep { width: 1px; height: 18px; margin-left: 15px; background-color: #555; }
.ext-split { margin-left: 14px; }
.ext-favs { margin-left: 27px; }
.ext-coll { margin-left: 26px; }
.ext-health { margin-left: 26px; }
.ext-more { width: 14px; height: 4px; margin-left: 28px; }
.ext-copilot { width: 24px; height: 26px; margin-left: 23px; }

.page {
	flex: 1;
	margin: 0 5px 5px;
	padding: 0.050px 8px;
	background-color: #fff;
	border-radius: 8px;
	color: #000;
	font-family: "Liberation Serif", serif;
	font-size: 16px;
}

/* taskbar */
.taskbar {
	height: 48px;
	flex: none;
	display: flex;
	align-items: center;
	background: linear-gradient(90deg, #4a1c20 0, #2c2025 180px, #231f24 700px, #21201f 1000px, #2a2024 1290px, #1f2226 1480px, #2a2422 1860px);
	border-top: 1px solid #4a4a4a;
}
.tb-weather { width: 660px; flex: none; display: flex; align-items: center; padding-left: 20px; }
.tb-sun { width: 24px; height: 24px; }
.tb-wtext { margin: -2px 0 0 6px; line-height: 16px; font-size: 11.400px; }
.tb-temp { color: #f0f0f0; }
.tb-sky { color: #cfcfcf; }
.tb-center { display: flex; align-items: center; }
.tb-win { width: 24px; height: 24px; }
.tb-search {
	width: 220px;
	height: 32px;
	margin: 0 2px 0 13px;
	display: flex;
	align-items: center;
	gap: 10px;
	padding-left: 9px;
	background-color: #3f3e42;
	border-radius: 16px;
	font-size: 13px;
	color: #d8d8d8;
}
.tb-search-text { margin-top: -2px; }
.tb-app { width: 44px; height: 47px; display: flex; align-items: center; justify-content: center; position: relative; }
.tb-run::after {
	content: "";
	position: absolute;
	left: 19px;
	bottom: 3px;
	width: 6px;
	height: 3px;
	border-radius: 2px;
	background-color: #8a8a8a;
}
.tb-wide::after { left: 14px; width: 16px; }
.tb-teams { width: 30px; height: 30px; margin: -6px -3px 0 3px; }
.tb-snip { width: 26px; height: 28px; }
.tb-tray { margin-left: auto; display: flex; align-items: center; padding-right: 21px; }
.tray-up { width: 12px; height: 8px; }
.tray-od { margin-left: 18px; }
.tray-wifi { margin-left: 16px; }
.tray-vol { margin-left: 7px; }
.tray-clock { margin-left: 10px; width: 71px; text-align: right; line-height: 16px; font-size: 11.400px; color: #f0f0f0; }
.tray-bell { margin-left: 6px; }
```
